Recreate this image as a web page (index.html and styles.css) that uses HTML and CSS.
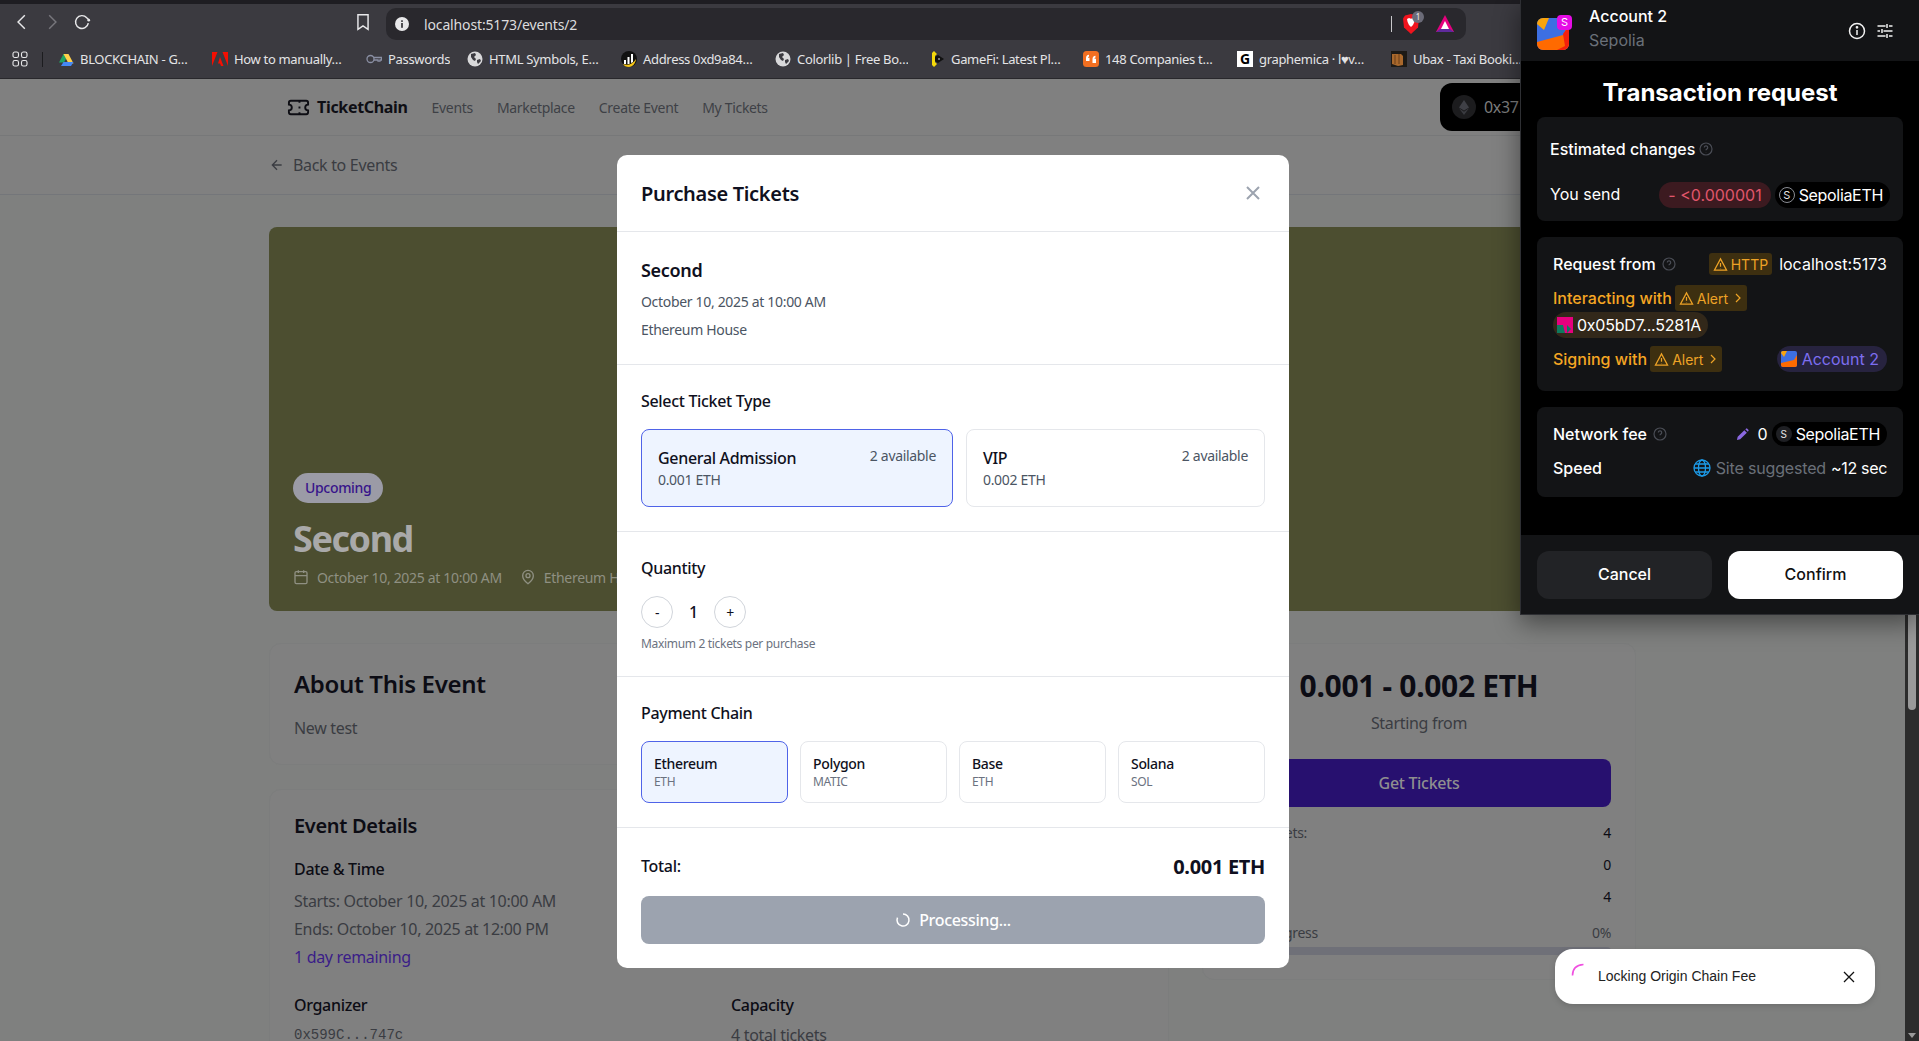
FILE: index.html
```html
<!DOCTYPE html>
<html lang="en">
<head>
    <meta charset="UTF-8">
    <meta name="viewport" content="width=device-width, initial-scale=1.0">
    <title>TicketChain</title>
    <link rel="stylesheet" href="styles.css">
</head>
<body>
    <div class="top-strip"></div>
    <div class="toolbar">
        <svg class="tool-icon" viewBox="0 0 16 16"><path d="M10.5 2 4.5 8l6 6"/></svg>
        <svg class="tool-icon tool-off" viewBox="0 0 16 16"><path d="M5.5 2l6 6-6 6"/></svg>
        <svg class="tool-icon" viewBox="0 0 16 16"><path d="M13.6 9a5.7 5.7 0 1 1-1.4-4.8L14 6"/><circle cx="14" cy="6.4" r="1.2" fill="#e8e8ea" stroke="none"/></svg>
        <svg class="tool-icon tool-mark" viewBox="0 0 16 16"><path d="M3.5 1.5h9v13L8 11.5l-4.500 3z"/></svg>
        <div class="urlbar">
            <svg class="url-info" viewBox="0 0 14 14"><circle cx="7" cy="7" r="7" fill="#e8e8ea"/><rect x="6.200" y="6" width="1.600" height="4.800" fill="#29282d"/><rect x="6.200" y="3.300" width="1.600" height="1.600" fill="#29282d"/></svg>
            <span class="url-text">localhost:5173/events/2</span>
            <span class="url-sep"></span>
            <span class="brave">
                <svg viewBox="0 0 16 20" width="16" height="20"><path d="M8 0l6 1.500 2 3-1 9-7 6.500-7-6.500-1-9 2-3z" fill="#f0141e"/><path d="M4 5l2-1 2 .7 2-.7 2 1-.6 3-1.400 3L8 13l-2-2-1.400-3z" fill="#fff"/></svg>
                <span class="brave-count">1</span>
            </span>
            <svg class="aurora" viewBox="0 0 18 18"><path d="M9 0l9 17H0z" fill="#e6007e"/><path d="M0 17l4-3h10l4 3z" fill="#5f2a9c"/><path d="M9 6l4 8H5z" fill="#fff"/></svg>
        </div>
    </div>
    <div class="bookmarks">
        <svg class="apps-icon" viewBox="0 0 16 16"><rect x="1" y="1" width="5.500" height="5.500" rx="1.800"/><rect x="9.500" y="1" width="5.500" height="5.500" rx="1.800"/><rect x="1" y="9.500" width="5.500" height="5.500" rx="1.800"/><rect x="9.500" y="9.500" width="5.500" height="5.500" rx="1.800"/></svg>
        <span class="apps-sep"></span>
        <div class="bookmark">
            <svg class="fav" viewBox="0 0 16 16"><path d="M5.500 1h5L6 9.500H1z" fill="#1fa463" transform="translate(0 2)"/><path d="M5.500 1h5l5 9.500h-5z" fill="#ffd04b" transform="translate(0 2)"/><path d="M3 15l2.500-4h10l-2.500 4z" fill="#4688f4"/></svg>
            <span class="bm-text">BLOCKCHAIN - G…</span>
        </div>
        <div class="bookmark">
            <svg class="fav" viewBox="0 0 16 16"><path d="M0 1h5.500L0 15zM10.500 1H16v14zM8 6l3.500 9H9L8 12.500H6z" fill="#f40f02"/></svg>
            <span class="bm-text">How to manually…</span>
        </div>
        <div class="bookmark bookmark-short">
            <svg class="fav" viewBox="0 0 16 16" fill="none" stroke="#8a8fa3" stroke-width="1.300"><circle cx="4.500" cy="8" r="3.500"/><path d="M8 6.500h7.500V9H14v1.200h-2V9H8"/></svg>
            <span class="bm-text">Passwords</span>
        </div>
        <div class="bookmark">
            <svg class="fav" viewBox="0 0 16 16"><circle cx="8" cy="8" r="7.500" fill="#d8d8da"/><path d="M4 3l4-1 1 2-2 2 2 2-1 2-2-1-2-3zM10 9l3-1 1 2-3 3-1-2z" fill="#3b3a40"/></svg>
            <span class="bm-text">HTML Symbols, E…</span>
        </div>
        <div class="bookmark">
            <svg class="fav" viewBox="0 0 16 16"><circle cx="8" cy="8" r="8" fill="#111"/><path d="M3 9h2v4H3zM6.500 6h2v7h-2zM10 3h2v8l-2 1z" fill="#fff"/><path d="M2 13c5 2 10 0 13-5-.5 5-4 8-7 8-3 0-5-1-6-3z" fill="#f5c518"/></svg>
            <span class="bm-text">Address 0xd9a84…</span>
        </div>
        <div class="bookmark">
            <svg class="fav" viewBox="0 0 16 16"><circle cx="8" cy="8" r="7.500" fill="#d8d8da"/><path d="M4 3l4-1 1 2-2 2 2 2-1 2-2-1-2-3zM10 9l3-1 1 2-3 3-1-2z" fill="#3b3a40"/></svg>
            <span class="bm-text">Colorlib | Free Bo…</span>
        </div>
        <div class="bookmark">
            <svg class="fav" viewBox="0 0 16 16"><path d="M5 0l3 3-2 2v6l2 2-3 3-2-2V2z" fill="#f5d90a"/><path d="M6 6l3-2 3 2 3 2-3 2-3 2-3-2z" fill="#111"/><circle cx="10" cy="8" r="1" fill="#999"/></svg>
            <span class="bm-text">GameFi: Latest Pl…</span>
        </div>
        <div class="bookmark">
            <svg class="fav" viewBox="0 0 16 16"><rect width="16" height="16" rx="3.500" fill="#f26f21"/><path d="M3 10V7c0-2 1-3 3-3.300V5.500c-.8.200-1 .6-1 1.200h1.500V10zM9.500 12V8c0-2 1-3 3-3.300v1.800c-.8.200-1 .6-1 1.200H13V12z" fill="#fff"/></svg>
            <span class="bm-text">148 Companies t…</span>
        </div>
        <div class="bookmark">
            <span class="fav fav-g">G</span>
            <span class="bm-text">graphemica · l♥v…</span>
        </div>
        <div class="bookmark">
            <svg class="fav" viewBox="0 0 16 16"><rect width="16" height="16" fill="#1d1a16"/><path d="M1 3h9l2 2v9l-5 1-6-2z" fill="#a9682c"/><path d="M4 4v9M8 3v10" stroke="#6b3f18"/></svg>
            <span class="bm-text">Ubax - Taxi Booki…</span>
        </div>
    </div>

    <div class="viewport">
        <div class="page">
            <nav class="site-nav">
                <div class="site-nav-inner">
                    <svg class="logo" viewBox="0 0 24 24"><path d="M2 9a3 3 0 0 1 0 6v2a2 2 0 0 0 2 2h16a2 2 0 0 0 2-2v-2a3 3 0 0 1 0-6V7a2 2 0 0 0-2-2H4a2 2 0 0 0-2 2Z"/><path d="M13 5v2M13 17v2M13 11v2"/></svg>
                    <span class="brand">TicketChain</span>
                    <a class="nav-link">Events</a>
                    <a class="nav-link">Marketplace</a>
                    <a class="nav-link">Create Event</a>
                    <a class="nav-link">My Tickets</a>
                    <div class="connect-pill">
                        <span class="connect-eth">
                            <svg viewBox="0 0 12 18" width="10" height="15"><path d="M6 0l6 9-6 3.500L0 9z" fill="#3f4046"/><path d="M6 14l6-4-6 8-6-8z" fill="#3a3b40"/></svg>
                        </span>
                        <span class="connect-addr">0x37</span>
                    </div>
                </div>
            </nav>
            <div class="subnav">
                <div class="subnav-inner">
                    <svg class="back-arrow" viewBox="0 0 24 24"><path d="M19 12H5M12 19l-7-7 7-7"/></svg>
                    <span>Back to Events</span>
                </div>
            </div>
            <main class="content">
                <section class="hero">
                    <span class="hero-badge">Upcoming</span>
                    <h1 class="hero-title">Second</h1>
                    <div class="hero-meta">
                        <svg class="hero-icon" viewBox="0 0 24 24"><rect x="3" y="4" width="18" height="18" rx="2"/><path d="M16 2v4M8 2v4M3 10h18"/></svg>
                        <span>October 10, 2025 at 10:00 AM</span>
                        <svg class="hero-icon hero-pin" viewBox="0 0 24 24"><path d="M20 10c0 6-8 12-8 12s-8-6-8-12a8 8 0 0 1 16 0Z"/><circle cx="12" cy="10" r="3"/></svg>
                        <span>Ethereum House</span>
                    </div>
                </section>
                <div class="columns">
                    <div class="left-col">
                        <section class="card">
                            <h2 class="about-title">About This Event</h2>
                            <p class="about-text">New test</p>
                        </section>
                        <section class="card details">
                            <h2 class="details-title">Event Details</h2>
                            <h3 class="details-label">Date &amp; Time</h3>
                            <p class="details-line">Starts: October 10, 2025 at 10:00 AM</p>
                            <p class="details-line">Ends: October 10, 2025 at 12:00 PM</p>
                            <p class="details-line details-accent">1 day remaining</p>
                            <div class="details-grid">
                                <div>
                                    <h3 class="details-label">Organizer</h3>
                                    <p class="details-mono">0x599C...747c</p>
                                </div>
                                <div>
                                    <h3 class="details-label">Capacity</h3>
                                    <p class="details-cap">4 total tickets</p>
                                </div>
                            </div>
                        </section>
                    </div>
                    <aside class="card side">
                        <div class="side-price">0.001 - 0.002 ETH</div>
                        <div class="side-from">Starting from</div>
                        <button class="side-btn">Get Tickets</button>
                        <div class="side-row"><span class="side-key">Total Tickets:</span><span>4</span></div>
                        <div class="side-row"><span class="side-key">Sold:</span><span>0</span></div>
                        <div class="side-row"><span class="side-key">Available:</span><span>4</span></div>
                        <div class="side-progress"><span>Sales Progress</span><span>0%</span></div>
                        <div class="side-bar"></div>
                    </aside>
                </div>
            </main>
        </div>
        <div class="scrollbar">
            <div class="scroll-thumb"></div>
            <div class="scroll-arrow"></div>
        </div>
    </div>

    <div class="modal">
        <div class="modal-head">
            <h2 class="modal-title">Purchase Tickets</h2>
            <svg class="modal-close" viewBox="0 0 24 24"><path d="M6 6l12 12M18 6 6 18"/></svg>
        </div>
        <div class="modal-sec">
            <h3 class="event-name">Second</h3>
            <p class="event-meta">October 10, 2025 at 10:00 AM</p>
            <p class="event-meta">Ethereum House</p>
        </div>
        <div class="modal-sec">
            <div class="sec-label">Select Ticket Type</div>
            <div class="ticket-grid">
                <div class="ticket is-active">
                    <div>
                        <div class="ticket-name">General Admission</div>
                        <div class="ticket-price">0.001 ETH</div>
                    </div>
                    <div class="ticket-avail">2 available</div>
                </div>
                <div class="ticket">
                    <div>
                        <div class="ticket-name">VIP</div>
                        <div class="ticket-price">0.002 ETH</div>
                    </div>
                    <div class="ticket-avail">2 available</div>
                </div>
            </div>
        </div>
        <div class="modal-sec">
            <div class="sec-label">Quantity</div>
            <div class="qty">
                <button class="qty-btn">-</button>
                <span class="qty-num">1</span>
                <button class="qty-btn">+</button>
            </div>
            <p class="qty-hint">Maximum 2 tickets per purchase</p>
        </div>
        <div class="modal-sec">
            <div class="sec-label">Payment Chain</div>
            <div class="chain-grid">
                <div class="chain is-active"><div class="chain-name">Ethereum</div><div class="chain-sym">ETH</div></div>
                <div class="chain"><div class="chain-name">Polygon</div><div class="chain-sym">MATIC</div></div>
                <div class="chain"><div class="chain-name">Base</div><div class="chain-sym">ETH</div></div>
                <div class="chain"><div class="chain-name">Solana</div><div class="chain-sym">SOL</div></div>
            </div>
        </div>
        <div class="modal-foot">
            <div class="total"><span class="total-key">Total:</span><span class="total-val">0.001 ETH</span></div>
            <button class="processing">
                <svg class="spin" viewBox="0 0 16 16"><path d="M8 2a6 6 0 1 1-5.500 3.600"/></svg>
                <span>Processing...</span>
            </button>
        </div>
    </div>

    <div class="wallet">
        <div class="w-head">
            <div class="w-avatar">
                <svg viewBox="0 0 32 32" width="32" height="32"><rect width="32" height="32" rx="6" fill="#3d6fe2"/><path d="M0 6a6 6 0 0 1 6-6h6l-5 12z" fill="#f9a40c"/><path d="M0 24l26-7 6-11v20a6 6 0 0 1-6 6H6a6 6 0 0 1-6-6z" fill="#ff6a00"/><path d="M32 8v18a6 6 0 0 1-6 6h-6l8-4-2-12z" fill="#f4200c"/></svg>
                <span class="w-badge">S</span>
            </div>
            <div class="w-account">
                <div class="w-name">Account 2</div>
                <div class="w-network">Sepolia</div>
            </div>
            <svg class="w-head-icon" viewBox="0 0 18 18"><circle cx="9" cy="9" r="7.500"/><path d="M9 8v5"/><circle cx="9" cy="5.300" r=".6"/></svg>
            <svg class="w-head-icon" viewBox="0 0 18 18"><path d="M1.500 4h8M13 4h3.500M1.500 9h2.500M7.500 9h9M1.500 14h8M13 14h3.500M11 2v4M6 7v4M11 12v4"/></svg>
        </div>
        <div class="w-body">
            <h2 class="w-title">Transaction request</h2>
            <section class="w-card w-card-send">
                <div class="w-row-title">
                    <span>Estimated changes</span>
                    <svg class="w-help" viewBox="0 0 14 14"><circle cx="7" cy="7" r="6"/><path d="M5.300 5.500a1.700 1.700 0 1 1 2.600 1.500c-.6.400-.9.700-.9 1.300M7 10.200v.2"/></svg>
                </div>
                <div class="w-row w-row-send">
                    <span class="w-send-label">You send</span>
                    <span class="w-amount">- &lt;0.000001</span>
                    <span class="w-token">
                        <span class="w-token-s">S</span>
                        SepoliaETH
                    </span>
                </div>
            </section>
            <section class="w-card w-card-req">
                <div class="w-row">
                    <span>Request from</span>
                    <svg class="w-help" viewBox="0 0 14 14"><circle cx="7" cy="7" r="6"/><path d="M5.300 5.500a1.700 1.700 0 1 1 2.600 1.500c-.6.400-.9.700-.9 1.300M7 10.200v.2"/></svg>
                    <span class="w-alert w-http">
                        <svg class="w-warn" viewBox="0 0 16 16"><path d="M8 2 1.500 14h13zM8 6.500v4M8 12v.3"/></svg>
                        HTTP
                    </span>
                    <span class="w-host">localhost:5173</span>
                </div>
                <div class="w-row w-warn-row">
                    <span>Interacting with</span>
                    <span class="w-alert w-alert-link">
                        <svg class="w-warn" viewBox="0 0 16 16"><path d="M8 2 1.500 14h13zM8 6.500v4M8 12v.3"/></svg>
                        Alert
                        <svg class="w-chev" viewBox="0 0 10 10"><path d="M3 1l4 4-4 4"/></svg>
                    </span>
                </div>
                <div class="w-addr-row">
                    <span class="w-addr">
                        <svg viewBox="0 0 16 16" width="16" height="16"><rect width="16" height="16" fill="#e6007e"/><path d="M0 8h6l2 8H0zM10 8l4 4-4 4z" fill="#0e7a5f"/></svg>
                        0x05bD7...5281A
                    </span>
                </div>
                <div class="w-row w-warn-row w-row-sign">
                    <span>Signing with</span>
                    <span class="w-alert w-alert-link">
                        <svg class="w-warn" viewBox="0 0 16 16"><path d="M8 2 1.500 14h13zM8 6.500v4M8 12v.3"/></svg>
                        Alert
                        <svg class="w-chev" viewBox="0 0 10 10"><path d="M3 1l4 4-4 4"/></svg>
                    </span>
                    <span class="w-acct">
                        <svg viewBox="0 0 16 16" width="16" height="16"><rect width="16" height="16" rx="2" fill="#3d6fe2"/><path d="M0 2a2 2 0 0 1 2-2h4L3 6z" fill="#f9a40c"/><path d="M0 12l13-3 3-5v10a2 2 0 0 1-2 2H2a2 2 0 0 1-2-2z" fill="#ff6a00"/></svg>
                        Account 2
                    </span>
                </div>
            </section>
            <section class="w-card w-card-fee">
                <div class="w-row">
                    <span>Network fee</span>
                    <svg class="w-help" viewBox="0 0 14 14"><circle cx="7" cy="7" r="6"/><path d="M5.300 5.500a1.700 1.700 0 1 1 2.600 1.500c-.6.400-.9.700-.9 1.300M7 10.200v.2"/></svg>
                    <svg class="w-pencil" viewBox="0 0 14 14"><path d="M1 13l.8-3.500L9 2.300 11.700 5 4.500 12.200zM10 1.300l.8-.6a1 1 0 0 1 1.400 0l1.100 1.100a1 1 0 0 1 0 1.400l-.6.800z"/></svg>
                    <span class="w-zero">0</span>
                    <span class="w-token w-token-fee">
                        <span class="w-token-s">S</span>
                        SepoliaETH
                    </span>
                </div>
                <div class="w-row w-row-speed">
                    <span>Speed</span>
                    <svg class="w-globe" viewBox="0 0 18 18"><circle cx="9" cy="9" r="8"/><ellipse cx="9" cy="9" rx="3.500" ry="8"/><path d="M1 9h16M2.200 5h13.600M2.200 13h13.600"/></svg>
                    <span class="w-site">Site suggested</span>
                    <span class="w-time">~12 sec</span>
                </div>
            </section>
        </div>
        <div class="w-foot">
            <button class="w-btn w-cancel">Cancel</button>
            <button class="w-btn w-confirm">Confirm</button>
        </div>
    </div>

    <div class="toast">
        <svg class="toast-spin" viewBox="0 0 14 14"><path d="M1.500 12.500C1.500 6 5 2 12.500 1.500"/></svg>
        <span class="toast-text">Locking Origin Chain Fee</span>
        <svg class="toast-close" viewBox="0 0 12 12"><path d="M1 1l10 10M11 1 1 11"/></svg>
    </div>
</body>
</html>
```
FILE: styles.css
```css
* {
    box-sizing: border-box;
}
body {
    margin: 0;
    height: 100vh;
    overflow: hidden;
    display: flex;
    flex-direction: column;
    position: relative;
    font-family: 'Noto Sans', 'Open Sans', sans-serif;
    letter-spacing: -0.02em;
    background: #7f807f;
    color: #111;
}
h1, h2, h3, p {
    margin: 0;
}
button {
    font-family: inherit;
    letter-spacing: inherit;
    border: none;
}

/* browser chrome */
.top-strip {
    height: 4px;
    background: #1e1d22;
}
.toolbar {
    height: 36px;
    background: #3b3a40;
    display: flex;
    align-items: center;
    padding-left: 13px;
    gap: 12px;
}
.tool-icon {
    width: 18px;
    height: 18px;
    fill: none;
    stroke: #e8e8ea;
    stroke-width: 1.300;
}
.tool-off {
    stroke: #77767c;
}
.tool-mark {
    margin-left: 251px;
    width: 18px;
    height: 20px;
}
.urlbar {
    margin-left: 2px;
    width: 1080px;
    height: 32px;
    margin-top: 4px;
    background: #29282d;
    border-radius: 10px;
    display: flex;
    align-items: center;
    padding-left: 9px;
}
.url-info {
    width: 14px;
    height: 14px;
}
.url-text {
    margin-left: 15px;
    color: #dcdcde;
    font-size: 14px;
    letter-spacing: -0.01em;
}
.url-sep {
    width: 1px;
    height: 16px;
    background: #c8c8ca;
    margin-left: auto;
}
.brave {
    position: relative;
    margin-left: 11px;
    height: 20px;
    display: flex;
}
.brave-count {
    position: absolute;
    left: 9px;
    top: -3px;
    width: 12px;
    height: 12px;
    border-radius: 50%;
    background: #6b6b78;
    color: #eee;
    font-size: 8px;
    line-height: 12px;
    text-align: center;
}
.aurora {
    width: 18px;
    height: 18px;
    margin-left: 17px;
    margin-right: 12px;
}
.bookmarks {
    height: 39px;
    background: #3b3a40;
    border-bottom: 1px solid #29282c;
    display: flex;
    align-items: center;
    padding-left: 12px;
    color: #e4e4e6;
    font-size: 13px;
}
.apps-icon {
    width: 16px;
    height: 16px;
    fill: none;
    stroke: #e8e8ea;
    stroke-width: 1.100;
}
.apps-sep {
    width: 1px;
    height: 15px;
    background: #1c1c1f;
    margin: 0 15px 0 14px;
}
.bookmark {
    width: 133px;
    margin-right: 21px;
    display: flex;
    align-items: center;
    gap: 6px;
    white-space: nowrap;
    overflow: hidden;
    flex: none;
}
.bookmark-short {
    width: 84px;
    margin-right: 17px;
}
.fav {
    width: 16px;
    height: 16px;
    flex: none;
}
.fav-g {
    background: #fff;
    color: #000;
    font-weight: 700;
    font-size: 14px;
    line-height: 16px;
    text-align: center;
}

/* page behind the dialog, colours are as seen through the dark backdrop */
.viewport {
    flex: 1;
    display: flex;
    overflow: hidden;
    min-height: 0;
}
.page {
    flex: 1;
    min-width: 0;
    overflow: hidden;
}
.site-nav {
    height: 57px;
    background: #808080;
    border-bottom: 1px solid #777879;
}
.site-nav-inner {
    width: 1367px;
    height: 56px;
    margin: 0 auto;
    padding-left: 18px;
    display: flex;
    align-items: center;
}
.logo {
    width: 23px;
    height: 23px;
    fill: none;
    stroke: #0e0e14;
    stroke-width: 2;
}
.brand {
    margin-left: 7px;
    margin-right: 24px;
    font-size: 16px;
    font-weight: 700;
    color: #0e0e14;
}
.nav-link {
    margin-right: 24px;
    font-size: 14px;
    color: #3e4046;
}
.connect-pill {
    margin-left: auto;
    width: 196px;
    height: 48px;
    background: #000;
    border-radius: 12px;
    display: flex;
    align-items: center;
    padding-left: 12px;
}
.connect-eth {
    width: 24px;
    height: 24px;
    border-radius: 50%;
    background: #1c1c1e;
    display: flex;
    align-items: center;
    justify-content: center;
}
.connect-addr {
    margin-left: 8px;
    color: #7c7c7c;
    font-size: 16px;
}
.subnav {
    height: 59px;
    background: #808080;
    border-bottom: 1px solid #74767a;
}
.subnav-inner {
    width: 1367px;
    height: 58px;
    margin: 0 auto;
    display: flex;
    align-items: center;
    gap: 8px;
    font-size: 16px;
    color: #3a3c42;
}
.back-arrow {
    width: 16px;
    height: 16px;
    fill: none;
    stroke: #3a3c42;
    stroke-width: 2;
}
.content {
    width: 1367px;
    margin: 0 auto;
    padding-top: 32px;
}
.hero {
    height: 384px;
    background: #4c4e30;
    border-radius: 8px;
    padding: 24px;
    display: flex;
    flex-direction: column;
    justify-content: flex-end;
    align-items: flex-start;
}
.hero-badge {
    height: 30px;
    padding: 0 12px;
    border-radius: 15px;
    background: #9b9ba6;
    color: #37148a;
    font-size: 14px;
    font-weight: 500;
    line-height: 30px;
    margin-bottom: 16px;
}
.hero-title {
    font-size: 36px;
    line-height: 40px;
    font-weight: 700;
    letter-spacing: -0.04em;
    color: #a9a9a9;
    margin-bottom: 8px;
}
.hero-meta {
    height: 20px;
    display: flex;
    align-items: center;
    color: #8f9082;
    font-size: 14px;
}
.hero-icon {
    width: 16px;
    height: 16px;
    fill: none;
    stroke: #8f9082;
    stroke-width: 2;
    margin-right: 8px;
}
.hero-pin {
    margin-left: 18px;
}
.columns {
    display: grid;
    grid-template-columns: 900px 434px;
    gap: 33px;
    margin-top: 32px;
    align-items: start;
}
.left-col {
    display: flex;
    flex-direction: column;
    gap: 24px;
}
.card {
    background: #808080;
    border: 1px solid #7c7d7d;
    border-radius: 12px;
    padding: 24px;
}
.about-title {
    font-size: 24px;
    line-height: 32px;
    font-weight: 600;
    color: #0c0c14;
    margin-bottom: 16px;
}
.about-text {
    font-size: 16px;
    line-height: 24px;
    color: #3a3c42;
}
.details-title {
    font-size: 20px;
    line-height: 24px;
    font-weight: 600;
    color: #0c0c14;
    margin-bottom: 19px;
}
.details-label {
    font-size: 16px;
    line-height: 24px;
    font-weight: 500;
    color: #0c0c14;
    margin-bottom: 6px;
}
.details-line {
    font-size: 16px;
    line-height: 28px;
    color: #3a3c42;
}
.details-accent {
    color: #3a1d88;
}
.details-grid {
    display: grid;
    grid-template-columns: 1fr 1fr;
    gap: 24px;
    margin-top: 22px;
}
.details-mono {
    font-family: 'Liberation Mono', monospace;
    letter-spacing: 0;
    font-size: 14px;
    line-height: 24px;
    color: #3a3c42;
}
.details-cap {
    font-size: 16px;
    line-height: 24px;
    color: #3a3c42;
}
.side-price {
    font-size: 30px;
    line-height: 36px;
    font-weight: 700;
    color: #0c0c14;
    text-align: center;
    margin-bottom: 7px;
}
.side-from {
    font-size: 16px;
    line-height: 24px;
    color: #3a3c42;
    text-align: center;
    margin-bottom: 24px;
}
.side-btn {
    width: 100%;
    height: 48px;
    border-radius: 8px;
    background: #27106f;
    color: #8f8f8f;
    font-size: 16px;
    font-weight: 500;
    margin-bottom: 16px;
}
.side-row {
    display: flex;
    justify-content: space-between;
    font-size: 14px;
    line-height: 20px;
    margin-bottom: 12px;
    color: #0c0c14;
}
.side-key {
    color: #3a3c42;
}
.side-progress {
    display: flex;
    justify-content: space-between;
    font-size: 14px;
    line-height: 20px;
    color: #3a3c42;
    margin-top: 16px;
    margin-bottom: 4px;
}
.side-bar {
    height: 8px;
    border-radius: 4px;
    background: #6f7078;
}
.scrollbar {
    width: 14px;
    flex: none;
    background: #2c2c2c;
    display: flex;
    flex-direction: column;
    align-items: center;
}
.scroll-thumb {
    width: 8px;
    height: 616px;
    margin-top: 15px;
    border-radius: 4px;
    background: #9a9a9a;
}
.scroll-arrow {
    margin-top: auto;
    margin-bottom: 3px;
    border-left: 4px solid transparent;
    border-right: 4px solid transparent;
    border-top: 5px solid #9a9a9a;
}

/* purchase dialog */
.modal {
    position: absolute;
    left: 617px;
    top: 155px;
    width: 672px;
    height: 813px;
    background: #fff;
    border-radius: 10px;
    color: #0f1020;
}
.modal-head {
    height: 77px;
    border-bottom: 1px solid #e5e7eb;
    padding: 0 24px;
    display: flex;
    align-items: center;
    justify-content: space-between;
}
.modal-title {
    font-size: 20px;
    font-weight: 600;
}
.modal-close {
    width: 24px;
    height: 24px;
    fill: none;
    stroke: #9ca3af;
    stroke-width: 2;
}
.modal-sec {
    padding: 24px;
    border-bottom: 1px solid #e5e7eb;
}
.event-name {
    font-size: 18px;
    line-height: 28px;
    font-weight: 600;
}
.event-meta {
    margin-top: 8px;
    font-size: 14px;
    line-height: 20px;
    color: #4b5563;
}
.sec-label {
    font-size: 16px;
    line-height: 24px;
    font-weight: 500;
    margin-bottom: 16px;
}
.ticket-grid {
    display: grid;
    grid-template-columns: 312fr 299fr;
    gap: 13px;
}
.ticket {
    height: 78px;
    padding: 16px;
    border: 1px solid #e5e7eb;
    border-radius: 8px;
    display: flex;
    justify-content: space-between;
}
.ticket-name {
    font-size: 16px;
    line-height: 24px;
    font-weight: 500;
}
.ticket-price {
    font-size: 14px;
    line-height: 20px;
    color: #4b5563;
}
.ticket-avail {
    font-size: 14px;
    line-height: 20px;
    color: #4b5563;
}
.qty {
    display: flex;
    align-items: center;
    gap: 16px;
}
.qty-btn {
    width: 32px;
    height: 32px;
    border-radius: 50%;
    border: 1px solid #d1d5db;
    background: #fff;
    color: #0f1020;
    font-size: 14px;
    padding: 0;
}
.qty-num {
    font-size: 16px;
    font-weight: 500;
    width: 9px;
    text-align: center;
}
.qty-hint {
    margin-top: 8px;
    font-size: 12px;
    line-height: 16px;
    color: #6b7280;
}
.chain-grid {
    display: grid;
    grid-template-columns: repeat(4, 1fr);
    gap: 12px;
}
.chain {
    height: 62px;
    padding: 12px;
    border: 1px solid #e5e7eb;
    border-radius: 8px;
}
.chain-name {
    font-size: 14px;
    line-height: 20px;
    font-weight: 500;
}
.chain-sym {
    font-size: 12px;
    line-height: 16px;
    color: #6b7280;
}
.ticket.is-active, .chain.is-active {
    border-color: #4f63e8;
    background: #eef4ff;
}
.modal-foot {
    padding: 24px;
}
.total {
    display: flex;
    align-items: center;
    justify-content: space-between;
    height: 28px;
    margin-bottom: 16px;
}
.total-key {
    font-size: 16px;
    font-weight: 500;
}
.total-val {
    font-size: 20px;
    font-weight: 700;
}
.processing {
    width: 100%;
    height: 48px;
    border-radius: 8px;
    background: #9ca3af;
    color: #fff;
    font-size: 16px;
    font-weight: 500;
    display: flex;
    align-items: center;
    justify-content: center;
    gap: 8px;
}
.spin {
    width: 16px;
    height: 16px;
    fill: none;
    stroke: #fff;
    stroke-width: 1.500;
}

/* wallet popup */
.wallet {
    position: absolute;
    left: 1520px;
    top: 0;
    width: 399px;
    height: 615px;
    display: flex;
    flex-direction: column;
    background: #000;
    border-left: 1px solid #2e2f33;
    border-bottom: 1px solid #2e2f33;
    box-shadow: 0 8px 24px rgba(0, 0, 0, 0.45);
    font-family: Inter, 'Liberation Sans', sans-serif;
    letter-spacing: 0;
    color: #fff;
    font-size: 16px;
}
.w-head {
    height: 61px;
    flex: none;
    background: #131416;
    display: flex;
    align-items: center;
    padding: 0 25px 0 16px;
}
.w-avatar {
    position: relative;
    width: 32px;
    height: 32px;
    margin-top: 6px;
}
.w-badge {
    position: absolute;
    right: -3px;
    top: -3px;
    width: 15px;
    height: 15px;
    border-radius: 4px;
    background: #e60ce6;
    color: #fff;
    font-size: 11px;
    line-height: 15px;
    text-align: center;
}
.w-account {
    margin-left: 20px;
    margin-right: auto;
    margin-top: -2px;
}
.w-name {
    font-weight: 500;
    line-height: 24px;
    margin-top: -4px;
}
.w-network {
    color: #6a7079;
    line-height: 24px;
}
.w-head-icon {
    width: 18px;
    height: 18px;
    fill: none;
    stroke: #f2f2f2;
    stroke-width: 1.500;
    margin-left: 10px;
}
.w-body {
    flex: 1;
    padding: 0 16px;
}
.w-title {
    font-size: 24px;
    line-height: 32px;
    font-weight: 700;
    text-align: center;
    margin-top: 16px;
    margin-bottom: 8px;
}
.w-card {
    background: #131416;
    border-radius: 8px;
    margin-bottom: 16px;
}
.w-card-send {
    height: 104px;
    padding: 20px 13px 0;
}
.w-card-req {
    height: 154px;
    padding: 14px 16px 0;
}
.w-card-fee {
    height: 90px;
    padding: 14px 16px 0;
}
.w-row-title {
    display: flex;
    align-items: center;
    gap: 4px;
    height: 24px;
    font-weight: 500;
}
.w-row {
    display: flex;
    align-items: center;
    height: 26px;
    font-weight: 500;
}
.w-row-send {
    margin-top: 21px;
    font-weight: 400;
}
.w-send-label {
    margin-top: -3px;
}
.w-help {
    width: 14px;
    height: 14px;
    margin-left: 6px;
    fill: none;
    stroke: #4a4d55;
    stroke-width: 1.200;
}
.w-row-title .w-help {
    margin-left: 0;
}
.w-amount {
    margin-left: auto;
    height: 26px;
    padding: 0 9px;
    border-radius: 13px;
    background: #3c1a20;
    color: #e0566b;
    font-weight: 400;
    line-height: 26px;
}
.w-token {
    margin-left: 4px;
    height: 26px;
    padding: 0 7px 0 4px;
    border-radius: 13px;
    background: #000;
    display: flex;
    align-items: center;
    gap: 4px;
    font-weight: 400;
    letter-spacing: -0.02em;
}
.w-token-s {
    width: 16px;
    height: 16px;
    border-radius: 50%;
    border: 1px solid #8a8d94;
    color: #e6e6e6;
    font-size: 11px;
    line-height: 14px;
    text-align: center;
}
.w-alert {
    height: 22px;
    padding: 0 4px;
    border-radius: 3px;
    background: #3d2f10;
    color: #eea326;
    font-size: 14px;
    font-weight: 400;
    display: flex;
    align-items: center;
    gap: 3px;
}
.w-http {
    margin-left: auto;
}
.w-host {
    margin-left: 7px;
    font-weight: 400;
}
.w-warn {
    width: 15px;
    height: 15px;
    fill: none;
    stroke: #eea326;
    stroke-width: 1.300;
}
.w-chev {
    width: 10px;
    height: 10px;
    fill: none;
    stroke: #eea326;
    stroke-width: 1.200;
    margin-left: 2px;
}
.w-warn-row {
    color: #f5a623;
    margin-top: 8px;
}
.w-warn-row .w-alert {
    height: 26px;
    margin-left: 3px;
}
.w-addr-row {
    display: flex;
    margin-top: 1px;
}
.w-addr {
    height: 26px;
    padding: 0 7px 0 4px;
    border-radius: 13px;
    background: #32281a;
    display: flex;
    align-items: center;
    gap: 4px;
    letter-spacing: -0.015em;
}
.w-row-sign {
    margin-top: 8px;
}
.w-acct {
    margin-left: auto;
    height: 26px;
    padding: 0 8px 0 4px;
    border-radius: 13px;
    background: #27233f;
    color: #7d6ef0;
    font-weight: 400;
    display: flex;
    align-items: center;
    gap: 5px;
}
.w-pencil {
    width: 13px;
    height: 13px;
    margin-left: auto;
    fill: #8a68e0;
}
.w-zero {
    margin-left: 9px;
    font-weight: 400;
}
.w-token-fee {
    height: 24px;
    border-radius: 12px;
}
.w-token-fee .w-token-s {
    background: #1f2024;
    border: none;
    font-size: 10px;
    line-height: 16px;
}
.w-row-speed {
    margin-top: 8px;
}
.w-globe {
    width: 18px;
    height: 18px;
    margin-left: auto;
    fill: none;
    stroke: #1d9be8;
    stroke-width: 1.300;
}
.w-site {
    margin-left: 5px;
    color: #6a7079;
    font-weight: 400;
    letter-spacing: -0.01em;
}
.w-time {
    margin-left: 5px;
    font-weight: 400;
    letter-spacing: -0.02em;
}
.w-foot {
    height: 79px;
    flex: none;
    background: #131416;
    padding: 16px;
    display: grid;
    grid-template-columns: 1fr 1fr;
    gap: 16px;
}
.w-btn {
    height: 48px;
    padding: 0 0 2px;
    border-radius: 12px;
    font-family: Inter, 'Liberation Sans', sans-serif;
    font-size: 16px;
    font-weight: 500;
}
.w-cancel {
    background: #222326;
    color: #fff;
}
.w-confirm {
    background: #fff;
    color: #111;
}

/* toast */
.toast {
    position: absolute;
    left: 1555px;
    top: 949px;
    width: 320px;
    height: 55px;
    background: #fff;
    border-radius: 18px;
    display: flex;
    align-items: center;
    padding: 0 20px 2px 16px;
    box-shadow: 0 2px 6px rgba(0, 0, 0, 0.15);
    font-family: 'Liberation Sans', Arial, sans-serif;
    letter-spacing: 0;
}
.toast-spin {
    width: 14px;
    height: 14px;
    margin-top: -12px;
    fill: none;
    stroke: #f050e0;
    stroke-width: 1.600;
}
.toast-text {
    margin-left: 13px;
    font-size: 14px;
    color: #222;
}
.toast-close {
    width: 12px;
    height: 12px;
    margin-top: 2px;
    margin-left: auto;
    fill: none;
    stroke: #111;
    stroke-width: 1.300;
}
```
